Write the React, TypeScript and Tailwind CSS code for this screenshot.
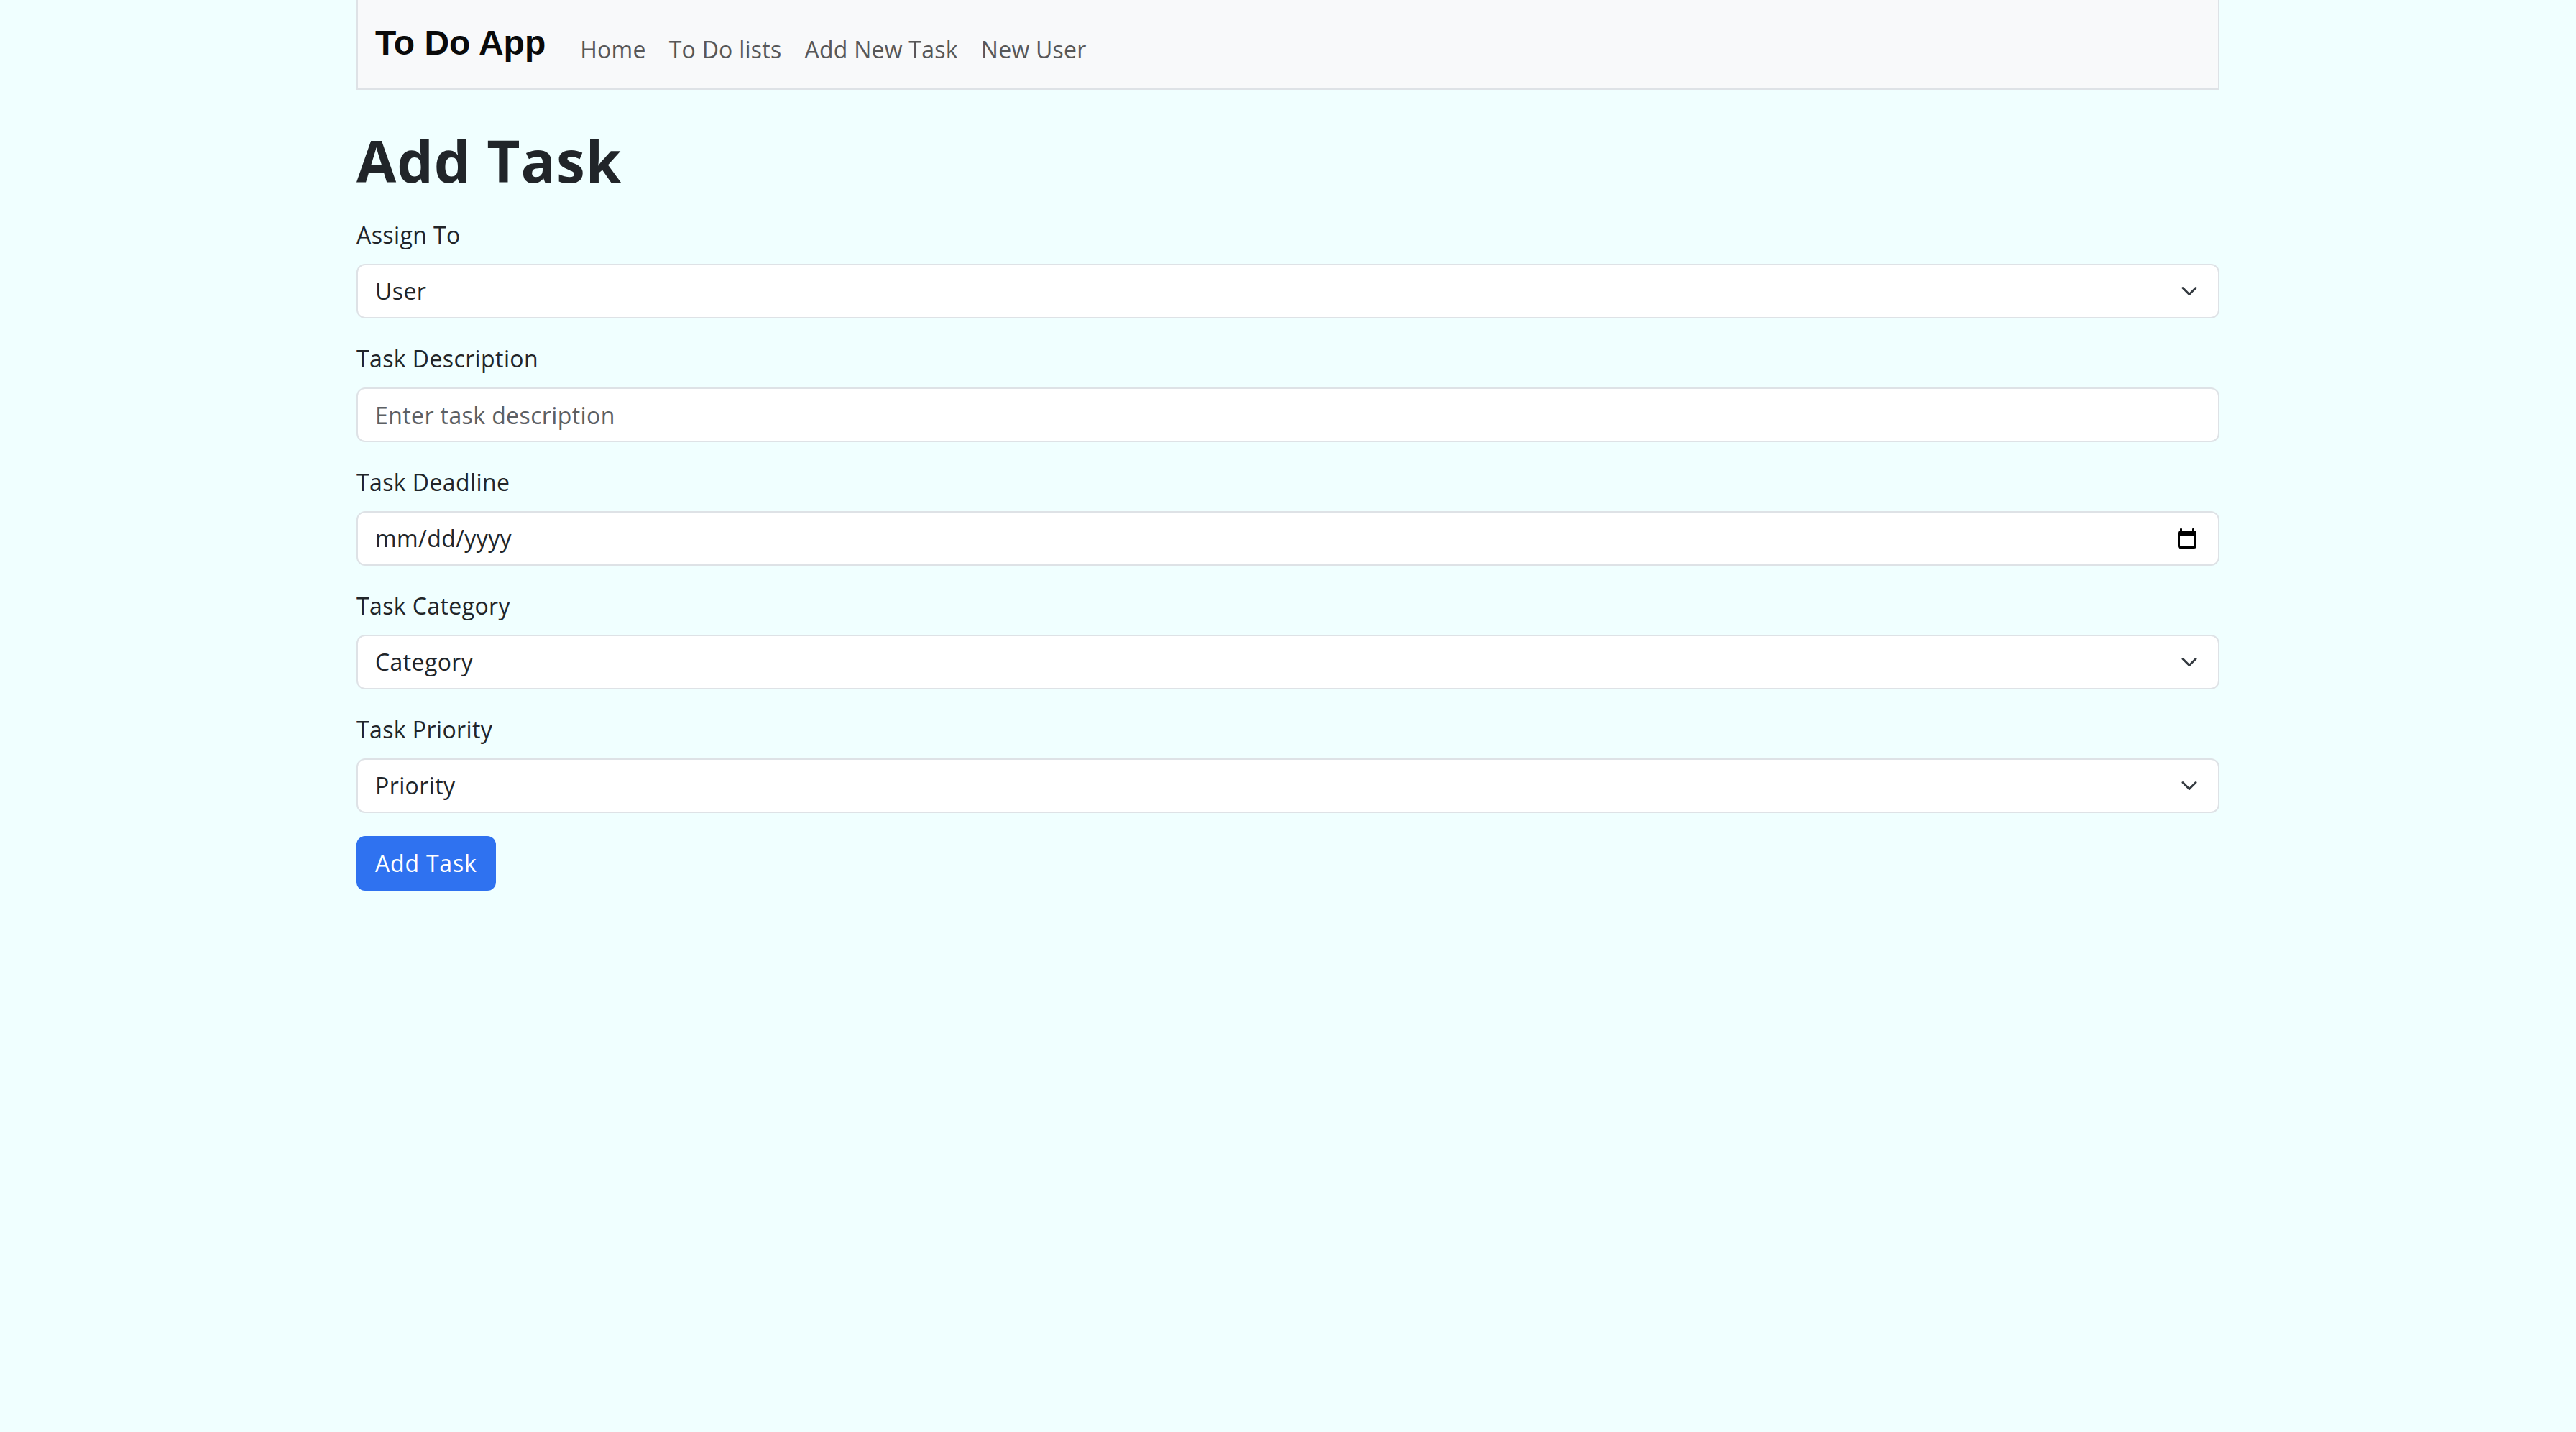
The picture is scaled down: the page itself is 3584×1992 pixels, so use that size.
const comic = "font-['Comic_Sans_MS','Open_Sans',sans-serif]"

function Chevron() {
  return (
    <svg width="32" height="24" viewBox="0 0 16 16" fill="none" className="shrink-0">
      <path d="m2 5 6 6 6-6" stroke="#343a40" strokeWidth="2" strokeLinecap="round" strokeLinejoin="round" />
    </svg>
  )
}

function CalendarIcon() {
  return (
    <svg width="26" height="28" viewBox="0 0 26 28" className="shrink-0">
      <rect x="3" y="0" width="3" height="5" rx="1" fill="#000" />
      <rect x="20" y="0" width="3" height="5" rx="1" fill="#000" />
      <rect x="0" y="3" width="26" height="25" rx="3.5" fill="#000" />
      <rect x="3" y="10" width="20" height="15" rx="1" fill="#fff" />
    </svg>
  )
}

function Label({ children }: { children: string }) {
  return <label className="block mb-[16px] text-[32px] leading-[48px] tracking-[0.4px] text-[#212529]">{children}</label>
}

function SelectBox({ value }: { value: string }) {
  return (
    <div className="flex items-center justify-between h-[76px] bg-white border-2 border-[#dee2e6] rounded-[12px] pl-[24px] pr-[24px]">
      <span className="text-[32px] leading-[48px] tracking-[0.4px] text-[#212529]">{value}</span>
      <Chevron />
    </div>
  )
}

function Field({ label, children }: { label: string; children: React.ReactNode }) {
  return (
    <div className="mb-[32px]">
      <Label>{label}</Label>
      {children}
    </div>
  )
}

export default function App() {
  const links = ['Home', 'To Do lists', 'Add New Task', 'New User']

  return (
    <div className={`min-h-screen bg-[#f0ffff] ${comic}`}>
      <div className="w-[2592px] mx-auto">
        <nav className="h-[125px] bg-[#f8f9fa] border-x-2 border-b-2 border-[#dee2e6] px-[24px] flex items-start">
          <span className="mt-[24px] mr-[32px] text-[48px] leading-[72px] font-bold text-[#0a0a0a] font-['Liberation_Sans',Arial,sans-serif]">
            To Do App
          </span>
          <ul className="mt-[45px] flex">
            {links.map((l) => (
              <li key={l} className="px-[16px] text-[32px] leading-[48px] tracking-[0.25px] text-[#575758]">
                {l}
              </li>
            ))}
          </ul>
        </nav>

        <h1 className="mt-[50px] mb-[32px] text-[80px] leading-[96px] font-bold tracking-[1px] text-[#212529]">Add Task</h1>

        <form>
          <Field label="Assign To">
            <SelectBox value="User" />
          </Field>

          <Field label="Task Description">
            <input
              type="text"
              placeholder="Enter task description"
              className="block w-full h-[76px] bg-white border-2 border-[#dee2e6] rounded-[12px] px-[24px] text-[32px] leading-[48px] tracking-[0.4px] text-[#212529] placeholder:text-[#5c6064] outline-none"
            />
          </Field>

          <Field label="Task Deadline">
            <div className="flex items-center justify-between h-[76px] bg-white border-2 border-[#dee2e6] rounded-[12px] pl-[24px] pr-[30px]">
              <span className="text-[32px] leading-[48px] tracking-[0.4px] text-[#212529]">mm/dd/yyyy</span>
              <CalendarIcon />
            </div>
          </Field>

          <Field label="Task Category">
            <SelectBox value="Category" />
          </Field>

          <Field label="Task Priority">
            <SelectBox value="Priority" />
          </Field>

          <button
            type="button"
            className="h-[76px] px-[24px] bg-[#2f72f0] border-2 border-[#2f72f0] rounded-[12px] text-white text-[32px] leading-[48px] tracking-[0.8px]"
          >
            Add Task
          </button>
        </form>
      </div>
    </div>
  )
}
